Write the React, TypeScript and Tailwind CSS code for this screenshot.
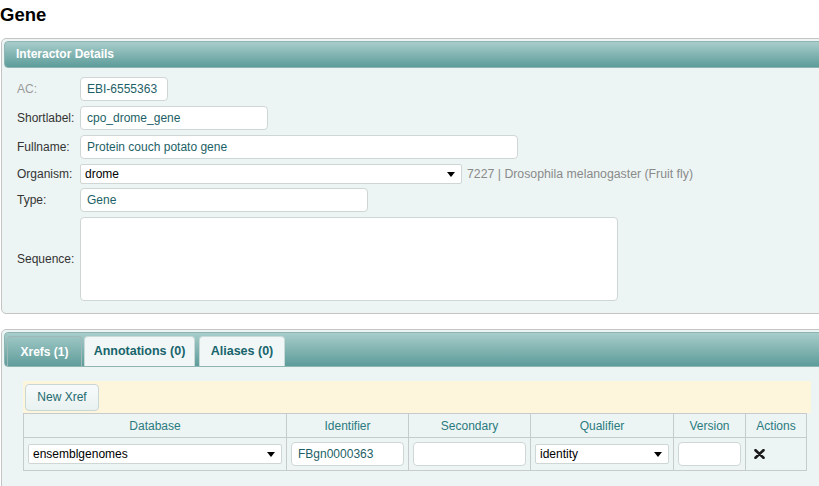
const inputCls =
  'h-[24px] rounded-[4px] border border-[#cfd6d6] bg-white px-[6px] text-[12px] text-[#1d5f66] outline-none';

function Campo({ rotulo, cinza, children }: { rotulo: string; cinza?: boolean; children: React.ReactNode }) {
  return (
    <div className="flex items-center">
      <span className={`w-[63px] shrink-0 text-[12px] ${cinza ? 'text-[#9a9a9a]' : 'text-[#333]'}`}>{rotulo}</span>
      {children}
    </div>
  );
}

function Seta() {
  return <span className="ml-auto h-0 w-0 border-x-[4px] border-t-[5px] border-x-transparent border-t-black" />;
}

function Selecao({ valor, largura }: { valor: string; largura: string }) {
  return (
    <div
      className={`flex h-[20px] items-center rounded-[2px] border border-[#cfd6d6] bg-white pl-[4px] pr-[6px] text-[12px] text-black ${largura}`}
    >
      <span>{valor}</span>
      <Seta />
    </div>
  );
}

function Remover() {
  return (
    <svg width="11" height="10" viewBox="0 0 11 10">
      <path d="M1.5 1.2 L9.5 8.8 M9.5 1.2 L1.5 8.8" stroke="#1a1a1a" strokeWidth="2.6" strokeLinecap="round" />
    </svg>
  );
}

export default function App() {
  return (
    <div className="w-[819px] h-[486px] overflow-hidden bg-white font-['Liberation_Sans',Arial,sans-serif]">
      <h1 className="pt-[3px] text-[18.5px] font-bold leading-[23px] text-black">Gene</h1>

      {/* Detalhes do interactor */}
      <div className="ml-[1px] mt-[12px] w-[840px] rounded-[5px] border border-[#c4c4c4] bg-[#edf5f4] p-[2px]">
        <div className="h-[27px] rounded-[4px] border border-[#8fb5b3] bg-gradient-to-b from-[#a8cdcb] to-[#5c9c9a]">
          <p className="pl-[11px] text-[12px] font-bold leading-[25px] text-white">Interactor Details</p>
        </div>
        <div className="flex flex-col gap-[5px] pl-[13px] pt-[9px] pb-[10px]">
          <Campo rotulo="AC:" cinza>
            <div className={`${inputCls} flex w-[88px] items-center`}>EBI-6555363</div>
          </Campo>
          <Campo rotulo="Shortlabel:">
            <div className={`${inputCls} flex w-[188px] items-center`}>cpo_drome_gene</div>
          </Campo>
          <Campo rotulo="Fullname:">
            <div className={`${inputCls} flex w-[438px] items-center`}>Protein couch potato gene</div>
          </Campo>
          <div className="-my-[1px] flex items-center pt-[1px]">
            <span className="w-[63px] shrink-0 text-[12px] text-[#333]">Organism:</span>
            <Selecao valor="drome" largura="w-[382px]" />
            <span className="ml-[5px] text-[12.3px] text-[#8a8a8a]">7227 | Drosophila melanogaster (Fruit fly)</span>
          </div>
          <Campo rotulo="Type:">
            <div className={`${inputCls} flex w-[288px] items-center`}>Gene</div>
          </Campo>
          <Campo rotulo="Sequence:">
            <div className="h-[84px] w-[538px] rounded-[4px] border border-[#cfd6d6] bg-white" />
          </Campo>
        </div>
      </div>

      {/* Separadores */}
      <div className="ml-[1px] mt-[15px] h-[200px] w-[840px] rounded-[5px] border border-[#c4c4c4] bg-[#edf5f4] p-[2px]">
        <div className="flex h-[35px] items-end rounded-[4px] border border-[#8fb5b3] bg-gradient-to-b from-[#a8cdcb] to-[#5c9c9a] pl-[2px]">
          <div className="flex h-[30px] w-[75px] items-center justify-center rounded-t-[4px] border border-b-0 border-[#9fb9b8] bg-gradient-to-b from-[#9cc6c4] to-[#5f9d9b] text-[12px] font-bold text-white">
            Xrefs (1)
          </div>
          <div className="ml-[2px] flex h-[30px] w-[111px] items-center justify-center rounded-t-[4px] border border-b-0 border-[#c9d9d8] bg-[#f1f7f7] text-[12.5px] font-bold text-[#17646b]">
            Annotations (0)
          </div>
          <div className="ml-[4px] flex h-[30px] w-[86px] items-center justify-center rounded-t-[4px] border border-b-0 border-[#c9d9d8] bg-[#f1f7f7] text-[12.5px] font-bold text-[#17646b]">
            Aliases (0)
          </div>
        </div>

        <div className="pl-[19px] pt-[14px]">
          <div className="flex h-[32px] w-[788px] items-center bg-[#fef6dc] pl-[2px]">
            <button className="h-[27px] w-[74px] rounded-[4px] border border-[#c9d6d6] bg-gradient-to-b from-[#f7fafa] to-[#e9f1f1] text-[12px] text-[#246a70]">
              New Xref
            </button>
          </div>
          <table className="w-[784px] border-collapse text-[12px]">
            <thead>
              <tr className="h-[24px] text-[#2a7a80]">
                <th className="w-[263px] border border-[#c6cccc] font-normal">Database</th>
                <th className="w-[122px] border border-[#c6cccc] font-normal">Identifier</th>
                <th className="w-[122px] border border-[#c6cccc] font-normal">Secondary</th>
                <th className="w-[143px] border border-[#c6cccc] font-normal">Qualifier</th>
                <th className="w-[72px] border border-[#c6cccc] font-normal">Version</th>
                <th className="border border-[#c6cccc] font-normal">Actions</th>
              </tr>
            </thead>
            <tbody>
              <tr className="h-[33px]">
                <td className="border border-[#c6cccc] px-[4px]">
                  <Selecao valor="ensemblgenomes" largura="w-[254px]" />
                </td>
                <td className="border border-[#c6cccc] px-[4px]">
                  <div className={`${inputCls} flex w-[113px] items-center`}>FBgn0000363</div>
                </td>
                <td className="border border-[#c6cccc] px-[4px]">
                  <div className={`${inputCls} w-[113px]`} />
                </td>
                <td className="border border-[#c6cccc] px-[4px]">
                  <Selecao valor="identity" largura="w-[134px]" />
                </td>
                <td className="border border-[#c6cccc] px-[4px]">
                  <div className={`${inputCls} w-[63px]`} />
                </td>
                <td className="border border-[#c6cccc] pl-[8px]">
                  <Remover />
                </td>
              </tr>
            </tbody>
          </table>
        </div>
      </div>
    </div>
  );
}
